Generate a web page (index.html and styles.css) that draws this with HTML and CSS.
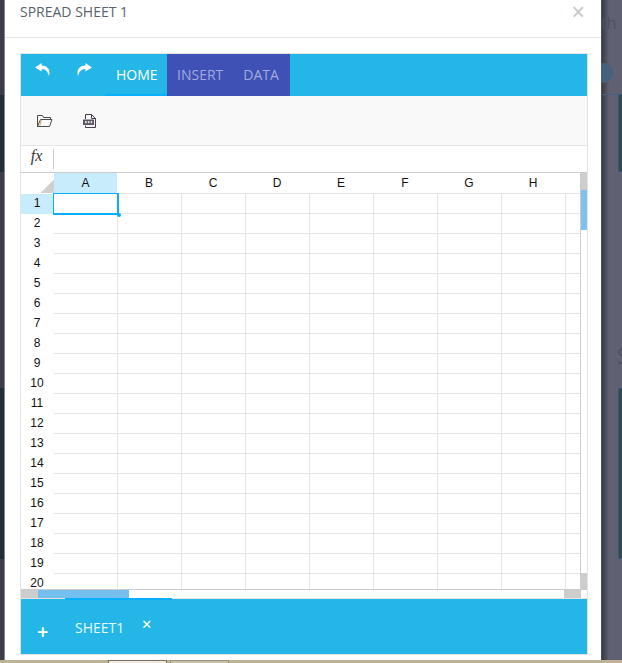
FILE: index.html
```html
<!DOCTYPE html>
<html lang="en">
<head>
  <meta charset="UTF-8" />
  <title>Spread Sheet 1</title>
  <link rel="stylesheet" href="styles.css">
</head>
<body>
  <div class="desk">
    <div class="backdrop">
      <div class="ghost-text ghost-top">th p</div>
      <div class="ghost-circle"></div>
      <div class="ghost-rule"></div>
      <div class="ghost-panel ghost-panel-one"></div>
      <div class="ghost-text ghost-mid">S</div>
      <div class="ghost-panel ghost-panel-two"></div>
      <div class="ghost-left ghost-left-one"></div>
      <div class="ghost-left ghost-left-two"></div>
    </div>

    <div class="modal">
      <div class="modal-header">
        <h4 class="modal-title">SPREAD SHEET 1</h4>
        <span class="modal-close">&times;</span>
      </div>

      <div class="modal-body">
        <div class="sheet">
          <div class="ribbon">
            <div class="ribbon-actions">
              <svg class="ribbon-icon" viewBox="0 0 15 13"><path d="M6.6 0 L0 4.4 L6.6 8.6 L6.6 6.2 C10.4 6 12.2 7.4 14 13 C15.8 7.4 13 2.8 6.6 2.6 Z" /></svg>
              <svg class="ribbon-icon" viewBox="0 0 15 13"><path d="M8.4 0 L15 4.4 L8.4 8.6 L8.4 6.2 C4.6 6 2.8 7.4 1 13 C-0.8 7.4 2 2.8 8.4 2.6 Z" /></svg>
            </div>
            <div class="tab tab-active">HOME</div>
            <div class="tab-group">
              <div class="tab">INSERT</div>
              <div class="tab">DATA</div>
            </div>
          </div>

          <div class="toolbar">
            <svg class="tool-icon tool-open" viewBox="0 0 16 12"><path d="M0.5 11.5 V0.5 H5.5 L6.5 2.5 H13.5 V4" /><path d="M3.5 4.5 H15 L12.5 11.5 H0.5 Z" /><path d="M4.3 5.5 L2.8 10.5" stroke="#e8a24a" /></svg>
            <svg class="tool-icon tool-save" viewBox="0 0 13 14"><path d="M2.5 5 V0.5 H8.5 L12.5 4.5 V13.5 H2.5 V11.5" stroke="#4a3a50" /><path d="M8.5 0.5 V4.5 H12.5" stroke="#4a3a50" /><rect x="0" y="5.5" width="11" height="5.5" fill="#5a5560" stroke="none" /><rect x="2" y="7" width="1.6" height="2.2" fill="#e6e6e6" stroke="none" /><rect x="4.8" y="7" width="1.6" height="2.2" fill="#e6e6e6" stroke="none" /><rect x="7.6" y="7" width="1.6" height="2.2" fill="#e6e6e6" stroke="none" /></svg>
          </div>

          <div class="formula-bar">
            <div class="formula-label">fx</div>
            <div class="formula-input"></div>
          </div>

          <div class="grid">
            <div class="grid-main">
              <div class="col-headers">
                <div class="corner"></div>
                <div class="col-head col-active">A</div>
                <div class="col-head">B</div>
                <div class="col-head">C</div>
                <div class="col-head">D</div>
                <div class="col-head">E</div>
                <div class="col-head">F</div>
                <div class="col-head">G</div>
                <div class="col-head">H</div>
              </div>
              <div class="grid-rows">
                <div class="row-headers">
                  <div class="row-head row-active">1</div>
                  <div class="row-head">2</div>
                  <div class="row-head">3</div>
                  <div class="row-head">4</div>
                  <div class="row-head">5</div>
                  <div class="row-head">6</div>
                  <div class="row-head">7</div>
                  <div class="row-head">8</div>
                  <div class="row-head">9</div>
                  <div class="row-head">10</div>
                  <div class="row-head">11</div>
                  <div class="row-head">12</div>
                  <div class="row-head">13</div>
                  <div class="row-head">14</div>
                  <div class="row-head">15</div>
                  <div class="row-head">16</div>
                  <div class="row-head">17</div>
                  <div class="row-head">18</div>
                  <div class="row-head">19</div>
                  <div class="row-head">20</div>
                </div>
                <div class="cells">
                  <div class="cell-selected"><span class="cell-handle"></span></div>
                </div>
              </div>
            </div>
            <div class="v-scroll">
              <div class="v-cap"></div>
              <div class="v-thumb"></div>
              <div class="v-track"></div>
              <div class="v-cap v-cap-end"></div>
            </div>
          </div>

          <div class="h-scroll">
            <div class="h-cap"></div>
            <div class="h-thumb"></div>
            <div class="h-track"></div>
            <div class="h-cap h-cap-end"></div>
          </div>

          <div class="sheet-tabs">
            <span class="sheet-add">+</span>
            <div class="sheet-tab">
              <span class="sheet-name">SHEET1</span>
              <span class="sheet-remove">&#10005;</span>
            </div>
          </div>
        </div>
      </div>
    </div>
  </div>

  <div class="taskbar">
    <div class="task-button"></div>
    <div class="task-button task-button-off"></div>
  </div>
</body>
</html>
```

FILE: styles.css
```css
* {
  box-sizing: border-box;
}

html, body {
  margin: 0;
  padding: 0;
}

body {
  width: 622px;
  height: 663px;
  overflow: hidden;
  font-family: "Open Sans", sans-serif;
  background: #bdb198;
}

.desk {
  position: relative;
  height: 660px;
  padding-left: 5px;
  background: #5f6071;
}

.backdrop {
  position: absolute;
  top: 0;
  left: 0;
  width: 622px;
  height: 660px;
  overflow: hidden;
  background: linear-gradient(to right, #3c3d47 0, #3c3d47 4px, #85858a 4px, #85858a 5px, transparent 5px),
              linear-gradient(to right, transparent 601px, #3a3a44 602px, #5f6071 609px);
}

.ghost-text {
  position: absolute;
  left: 601px;
  color: #4f505e;
  font-size: 16px;
  white-space: nowrap;
  filter: blur(0.5px);
}

.ghost-top {
  top: 12px;
}

.ghost-mid {
  top: 340px;
  left: 617px;
  font-size: 22px;
}

.ghost-circle {
  position: absolute;
  left: 593px;
  top: 63px;
  width: 20px;
  height: 20px;
  border-radius: 50%;
  background: #47607c;
}

.ghost-rule {
  position: absolute;
  top: 94px;
  left: 602px;
  width: 20px;
  height: 1px;
  background: #3f6288;
}

.ghost-panel {
  position: absolute;
  left: 618px;
  width: 10px;
  background: #2f4a50;
  border: 1px solid #35587a;
}

.ghost-panel-one {
  top: 94px;
  height: 78px;
}

.ghost-panel-two {
  top: 388px;
  height: 171px;
}

.ghost-left {
  position: absolute;
  left: 0;
  width: 4px;
  background: #1f2f33;
}

.ghost-left-one {
  top: 95px;
  height: 77px;
}

.ghost-left-two {
  top: 388px;
  height: 171px;
}

.modal {
  position: relative;
  width: 596px;
  height: 660px;
  background: #fff;
}

.modal-header {
  display: flex;
  justify-content: space-between;
  height: 38px;
  padding: 2px 15px 0;
  border-bottom: 1px solid #e5e5e5;
}

.modal-title {
  margin: 0;
  font-size: 14px;
  font-weight: 400;
  line-height: 20px;
  color: #58626b;
}

.modal-close {
  margin-right: 1px;
  font-family: "Liberation Sans", sans-serif;
  font-size: 23px;
  line-height: 20px;
  color: #c8c8c8;
}

.modal-body {
  padding: 15px 13px 0 15px;
}

.sheet {
  width: 568px;
  border: 1px solid #e3e3e3;
}

.ribbon {
  display: flex;
  height: 42px;
  background: #23b6e6;
}

.ribbon-actions {
  display: flex;
  gap: 27px;
  width: 84px;
  padding: 9px 0 0 14px;
}

.ribbon-icon {
  width: 15px;
  height: 13px;
  fill: #fff;
}

.tab {
  padding: 0 10px;
  font-size: 14px;
  line-height: 42px;
  color: #a3a9e0;
}

.tab-active {
  width: 62px;
  padding: 0 0 0 11px;
  color: #fff;
  border-bottom: 2px solid #0aaeff;
}

.tab-group {
  display: flex;
  width: 123px;
  background: #3f51b5;
}

.toolbar {
  display: flex;
  align-items: center;
  gap: 30px;
  height: 50px;
  padding: 0 0 0 16px;
  background: #f9f9f9;
  border-bottom: 1px solid #e5e5e5;
}

.tool-icon {
  fill: none;
  stroke: #4a4a4a;
  stroke-width: 1;
}

.tool-open {
  width: 16px;
  height: 12px;
}

.tool-save {
  width: 13px;
  height: 14px;
}

.formula-bar {
  display: flex;
  height: 26px;
  padding-top: 3px;
}

.formula-label {
  width: 33px;
  height: 20px;
  padding-right: 1px;
  border-right: 1px solid #ccc;
  font-family: "Liberation Serif", serif;
  font-size: 16px;
  font-style: italic;
  line-height: 14px;
  text-align: center;
  color: #333;
}

.formula-input {
  flex: 1;
}

.grid {
  display: flex;
  height: 418px;
  border-top: 1px solid #ccc;
  border-bottom: 1px solid #ccc;
}

.grid-main {
  width: 559px;
  overflow: hidden;
}

.col-headers {
  display: flex;
  height: 20px;
  font-family: "Liberation Sans", sans-serif;
  font-size: 12px;
  line-height: 20px;
  color: #111;
}

.corner {
  width: 33px;
  background: linear-gradient(135deg, transparent 50%, #d0d0d0 50%) no-repeat right bottom / 14px 14px;
}

.col-head {
  width: 64px;
  text-align: center;
}

.col-active {
  width: 63px;
  background: #c9ecfd;
}

.grid-rows {
  display: flex;
}

.row-headers {
  width: 33px;
  border-top: 1px solid #fff;
  font-family: "Liberation Sans", sans-serif;
  font-size: 12px;
  color: #111;
}

.row-head {
  height: 20px;
  padding-right: 1px;
  line-height: 19px;
  text-align: center;
}

.row-active {
  background: #c9ecfd;
}

.cells {
  position: relative;
  width: 526px;
  height: 396px;
  background-color: #fff;
  background-image: linear-gradient(to bottom, #e5e5e5 1px, transparent 1px),
                    linear-gradient(to right, transparent 63px, #e5e5e5 63px);
  background-size: 100% 20px, 64px 100%;
}

.cell-selected {
  position: absolute;
  top: 0;
  left: -1px;
  width: 66px;
  height: 22px;
  border: 2px solid #0aaeff;
  border-width: 1px 2px 2px 1px;
}

.cell-handle {
  position: absolute;
  right: -4px;
  bottom: -4px;
  width: 4px;
  height: 4px;
  border-radius: 50%;
  background: #0aaeff;
}

.v-scroll {
  display: flex;
  flex-direction: column;
  width: 7px;
  border-left: 1px solid #ccc;
}

.v-cap {
  height: 17px;
  background: #cdcdcd;
}

.v-thumb {
  height: 40px;
  background: #7cc4ef;
}

.v-track {
  flex: 1;
}

.v-cap-end {
  height: 16px;
}

.h-scroll {
  display: flex;
  height: 8px;
}

.h-cap {
  width: 17px;
  background: #cdcdcd;
}

.h-thumb {
  width: 91px;
  background: #74bfee;
}

.h-track {
  width: 435px;
}

.h-cap-end {
  width: 17px;
}

.sheet-tabs {
  display: flex;
  height: 56px;
  background: #23b6e6;
  border-top: 1px solid #e3e3e3;
  color: #fff;
}

.sheet-add {
  width: 44px;
  padding: 21px 0 0 16px;
  font-size: 20px;
  font-weight: 600;
  line-height: 24px;
}

.sheet-tab {
  display: flex;
  width: 107px;
  margin-top: -1px;
  padding: 18px 0 0 10px;
  border-top: 2px solid #0aaeff;
}

.sheet-name {
  font-size: 14px;
  line-height: 20px;
  color: #eaf8fd;
}

.sheet-remove {
  margin-left: 17px;
  font-family: "DejaVu Sans", sans-serif;
  font-size: 13px;
  line-height: 14px;
  font-weight: 700;
}

.taskbar {
  display: flex;
  gap: 3px;
  height: 3px;
  padding-left: 108px;
  background: #bdb198;
}

.task-button {
  width: 59px;
  height: 3px;
  background: #efeadd;
  border: 1px solid #77705f;
  border-bottom: 0;
}

.task-button-off {
  background: #c9c1ad;
  border-color: #9a927f;
}
```
